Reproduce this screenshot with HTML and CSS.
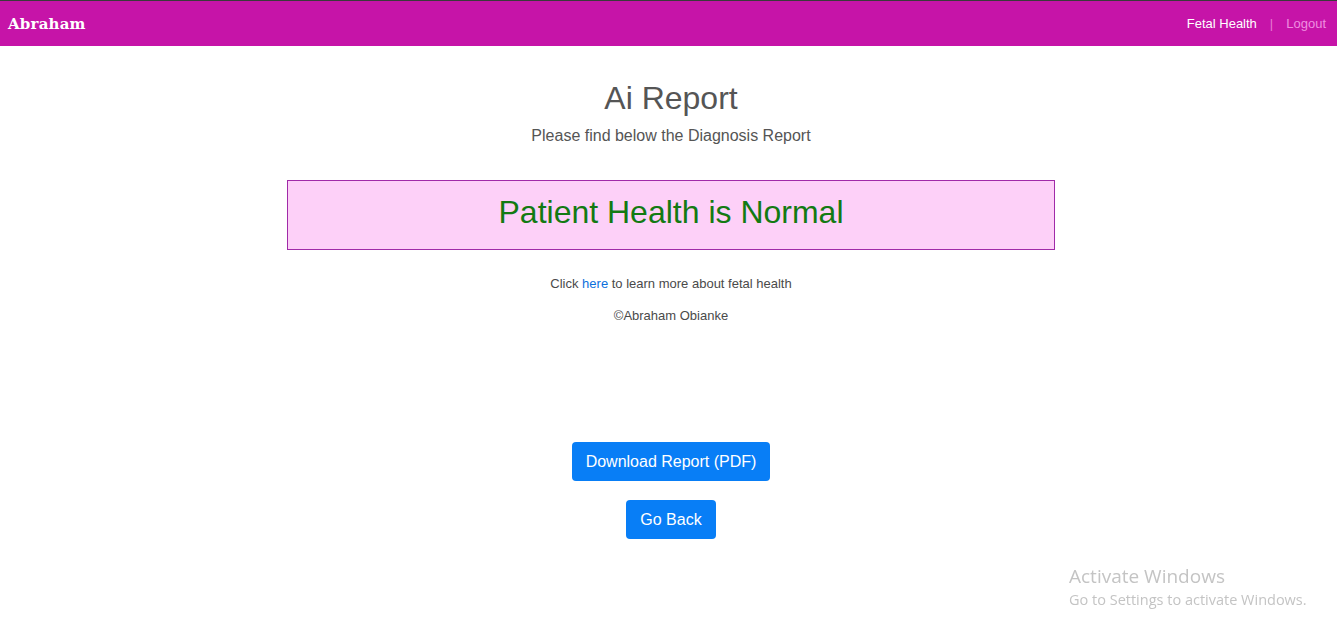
FILE: index.html
```html
<!DOCTYPE html>
<html>
<head>
<meta charset="utf-8">
<title>Ai Report</title>
<link rel="stylesheet" href="styles.css">
</head>
<body>
<nav class="navbar">
  <a class="brand" href="#">Abraham</a>
  <div class="nav-links">
    <a class="nav-active" href="#">Fetal Health</a>
    <span class="sep">|</span>
    <a class="nav-muted" href="#">Logout</a>
  </div>
</nav>
<main class="content">
  <h1 class="title">Ai Report</h1>
  <p class="subtitle">Please find below the Diagnosis Report</p>
  <div class="result">Patient Health is Normal</div>
  <p class="info">Click <a href="#">here</a> to learn more about fetal health</p>
  <p class="copy">©Abraham Obianke</p>
  <div class="actions">
    <button class="btn">Download Report (PDF)</button>
    <button class="btn">Go Back</button>
  </div>
</main>
<div class="watermark">
  <div class="wm-title">Activate Windows</div>
  <div class="wm-sub">Go to Settings to activate Windows.</div>
</div>
</body>
</html>
```

FILE: styles.css
```css
html, body {
  margin: 0;
  padding: 0;
  background: #fff;
  font-family: "Liberation Sans", Arial, sans-serif;
  color: #555;
}
.navbar {
  border-top: 1px solid #3a3a3a;
  background: #c614a8;
  height: 45px;
  display: flex;
  align-items: center;
  justify-content: space-between;
  padding: 0 11px 0 8px;
}
.brand {
  font-family: "DejaVu Serif", Georgia, serif;
  font-weight: bold;
  font-size: 15px;
  color: #fff;
  text-decoration: none;
  letter-spacing: 0.2px;
}
.nav-links {
  display: flex;
  align-items: center;
  gap: 13px;
  font-size: 13px;
}
.nav-links a { text-decoration: none; }
.nav-active { color: #fff; }
.sep { color: #e77bd5; }
.nav-muted { color: #ef8ee0; }
.content {
  display: flex;
  flex-direction: column;
  align-items: center;
  padding-left: 5px;
}
.title {
  margin: 33px 0 0;
  font-size: 32px;
  font-weight: normal;
  line-height: 38px;
  color: #555;
}
.subtitle {
  margin: 9px 0 0;
  font-size: 16px;
  line-height: 20px;
  color: #555;
}
.result {
  margin-top: 34px;
  box-sizing: border-box;
  width: 768px;
  height: 70px;
  background: #fdd0f8;
  border: 1px solid #a02aa8;
  color: #137a13;
  font-size: 32px;
  display: flex;
  align-items: center;
  justify-content: center;
  padding-bottom: 5px;
}
.info {
  margin: 26px 0 0;
  font-size: 13px;
  line-height: 16px;
  color: #4a4a4a;
}
.info a { color: #0b6fdc; text-decoration: none; }
.copy {
  margin: 16px 0 0;
  font-size: 13px;
  line-height: 16px;
  color: #4a4a4a;
}
.actions {
  margin-top: 118px;
  display: flex;
  flex-direction: column;
  align-items: center;
  gap: 19px;
}
.btn {
  background: #087ef6;
  color: #fff;
  border: none;
  border-radius: 4px;
  font-family: "Liberation Sans", Arial, sans-serif;
  font-size: 16px;
  height: 39px;
  padding: 0 14px;
}
.watermark {
  position: fixed;
  left: 1069px;
  top: 565px;
  font-family: "Open Sans", "Noto Sans", sans-serif;
  color: #c4c4c4;
}
.wm-title { font-size: 19px; line-height: 23px; }
.wm-sub { font-size: 14.5px; line-height: 24px; }
```
